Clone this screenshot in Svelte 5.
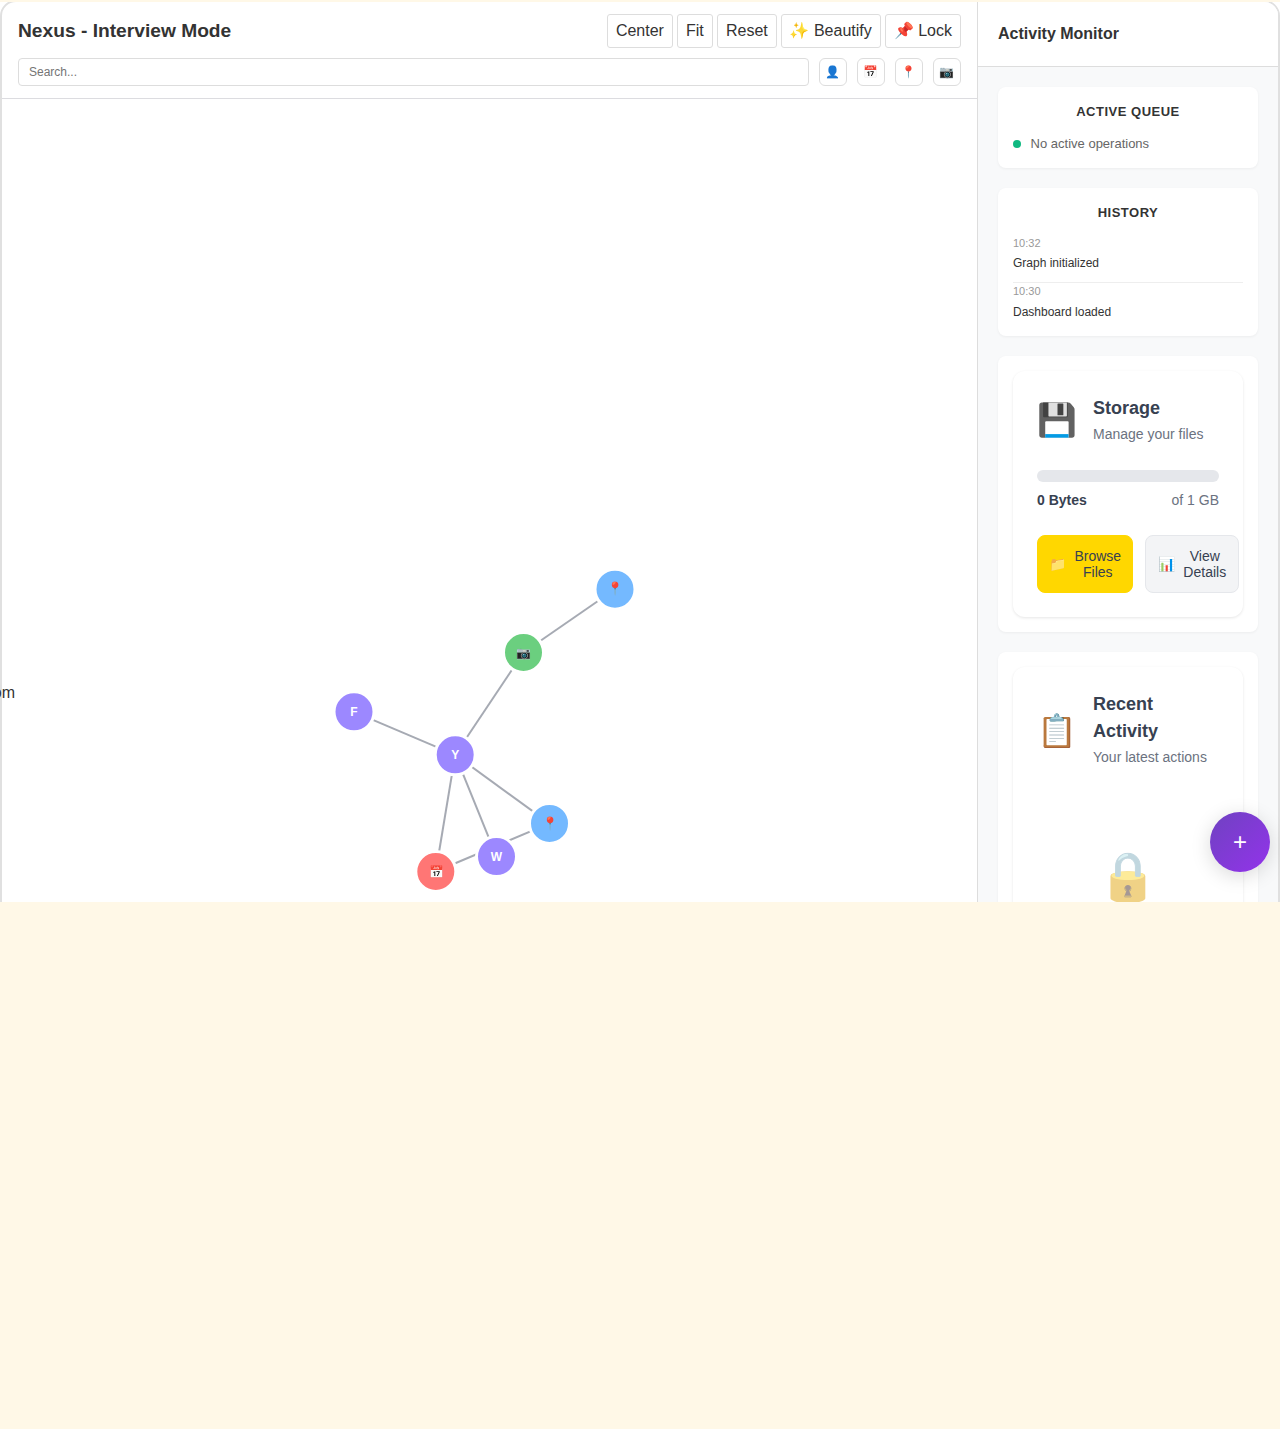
<script>
  const tools = ['Center', 'Fit', 'Reset', '✨ Beautify', '📌 Lock'];
  const filters = ['👤', '📅', '📍', '📷'];
  const nodes = [
    { x: 613, y: 587.2, fill: '#74b9ff', label: '📍' },
    { x: 521.5, y: 650.5, fill: '#6bcf7f', label: '📷' },
    { x: 352, y: 709.8, fill: '#9c88ff', label: 'F' },
    { x: 453.2, y: 752.8, fill: '#9c88ff', label: 'Y' },
    { x: 547.5, y: 821.4, fill: '#74b9ff', label: '📍' },
    { x: 494.5, y: 854.6, fill: '#9c88ff', label: 'W' },
    { x: 433.8, y: 869.5, fill: '#ff7675', label: '📅' }
  ];
  const edges = [[0, 1], [1, 3], [2, 3], [3, 6], [3, 5], [3, 4], [4, 6]];
  const history = [
    { time: '10:32', text: 'Graph initialized' },
    { time: '10:30', text: 'Dashboard loaded' }
  ];
</script>

<div class="viewport">
  <div class="frame">
    <main class="graph">
      <header>
        <div class="row">
          <h1>Nexus - Interview Mode</h1>
          <div class="tools">
            {#each tools as t}<button>{t}</button>{/each}
          </div>
        </div>
        <div class="row filters">
          <input placeholder="Search..." />
          {#each filters as f}<button class="filter">{f}</button>{/each}
        </div>
      </header>
      <svg class="canvas" viewBox="0 97 975 803" width="975" height="803">
        {#each edges as [a, b]}
          <line x1={nodes[a].x} y1={nodes[a].y} x2={nodes[b].x} y2={nodes[b].y} />
        {/each}
        {#each nodes as n}
          <circle cx={n.x} cy={n.y} r="20" fill={n.fill} />
          <text class:pin={n.label === '📍'} x={n.label.length > 1 ? n.x + 0.2 : n.x} y={n.y + 4.2}>{n.label}</text>
        {/each}
        <text class="loose" x="13" y="696">om</text>
      </svg>
    </main>
    <aside>
      <h2>Activity Monitor</h2>
      <div class="panels">
        <section>
          <h3>Active Queue</h3>
          <div class="status"><i></i>No active operations</div>
        </section>
        <section>
          <h3>History</h3>
          {#each history as h}
            <div class="entry"><time>{h.time}</time><p>{h.text}</p></div>
          {/each}
        </section>
        <section>
          <div class="card storage">
            <div class="head">
              <span class="icon">💾</span>
              <div><h4>Storage</h4><p>Manage your files</p></div>
            </div>
            <div class="meter"></div>
            <div class="usage"><b>0 Bytes</b><span>of 1 GB</span></div>
            <div class="actions">
              <button class="primary"><span>📁</span>Browse<br />Files</button>
              <button class="secondary"><span>📊</span>View<br />Details</button>
            </div>
          </div>
        </section>
        <section>
          <div class="card recent">
            <div class="head">
              <span class="icon">📋</span>
              <div><h4>Recent Activity</h4><p>Your latest actions</p></div>
            </div>
            <div class="lock">🔒</div>
          </div>
        </section>
      </div>
    </aside>
  </div>
  <button class="fab">+</button>
</div>

<style>
  :global(body) { margin: 0; background: #fff8e7; }
  * { box-sizing: border-box; }
  .viewport {
    position: relative;
    height: 902px;
    overflow: hidden;
    border-top: 2px solid #fff8e7;
    background: #fff;
    font-family: 'Liberation Sans', Arial, sans-serif;
    color: #333;
  }
  .frame {
    display: flex;
    height: 960px;
    margin-top: -2px;
    border: 2px solid #e0e0e0;
    border-radius: 16px;
    background: #fff;
  }
  h1, h2, h3, h4, p { margin: 0; }
  button { font-family: inherit; color: inherit; padding: 0; }
  .graph { width: 975px; flex: none; }
  header {
    height: 97px;
    padding: 12px 16px;
    border-bottom: 1px solid #dcdce0;
  }
  .row { display: flex; align-items: center; justify-content: space-between; height: 34px; }
  h1 { font-size: 19.2px; line-height: 32px; color: #333; }
  .tools { display: flex; gap: 4px; }
  .tools button {
    height: 34px;
    padding: 0 8px;
    border: 1px solid #ddd;
    border-radius: 3px;
    background: #fff;
    font-size: 16px;
    line-height: 18px;
  }
  .tools button:nth-child(3) { padding: 0 8.25px; }
  .tools button:nth-child(4) { padding: 0 8px 0 7.5px; }
  .filters { height: 28px; margin-top: 10px; gap: 10px; }
  input {
    flex: 1;
    height: 28px;
    padding: 0 10px;
    border: 1px solid #ddd;
    border-radius: 4px;
    font: 12px 'Liberation Sans', Arial, sans-serif;
  }
  .filter {
    width: 28px;
    height: 28px;
    padding-right: 0.4px;
    border: 1px solid #ddd;
    border-radius: 6px;
    background: #fff;
    font-size: 12px;
  }
  .canvas { display: block; overflow: visible; }
  line { stroke: #a6aab3; stroke-width: 2; }
  circle { stroke: #fff; stroke-width: 3; }
  text { font-size: 12px; font-weight: 700; fill: #fff; text-anchor: middle; }
  .pin { font-size: 13px; }
  .loose { font-size: 16px; font-weight: 400; fill: #333; text-anchor: end; }
  aside {
    flex: 1;
    min-width: 0;
    border-left: 1px solid #ddd;
    border-top-right-radius: 14px;
    background: #f8f9fa;
  }
  h2 {
    height: 65px;
    padding-left: 20px;
    border-bottom: 1px solid #ddd;
    border-top-right-radius: 14px;
    background: #fff;
    font-size: 16px;
    line-height: 64px;
    color: #333;
  }
  .panels { display: flex; flex-direction: column; gap: 20px; padding: 20px; }
  section {
    padding: 15px;
    border-radius: 8px;
    background: #fff;
    box-shadow: 0 1px 3px rgba(0, 0, 0, 0.05);
  }
  h3 {
    margin-bottom: 12px;
    font-size: 13px;
    line-height: 20px;
    letter-spacing: 0.5px;
    text-align: center;
    text-transform: uppercase;
    color: #333;
  }
  .status { display: flex; align-items: center; gap: 9.6px; height: 19px; font-size: 13px; color: #666; }
  .status i { width: 8px; height: 8px; border-radius: 50%; background: #10b981; }
  .entry { height: 48px; padding-top: 1px; border-bottom: 1px solid #eee; }
  .entry time { display: block; font-size: 11px; line-height: 15px; color: #999; }
  .entry p { margin-top: 2px; font-size: 12px; line-height: 20px; }
  .entry:last-child { height: 38px; border: 0; }
  .entry:last-child p { margin-top: 3px; }
  .card {
    height: 246px;
    padding: 24px;
    border-radius: 12px;
    background: #fff;
    box-shadow: 0 1px 3px rgba(0, 0, 0, 0.1);
  }
  .head { display: flex; align-items: center; gap: 16px; }
  .icon { width: 40px; font-size: 32px; line-height: 50px; text-align: center; }
  .storage .icon { padding-bottom: 1px; }
  .recent .icon { padding-top: 1px; }
  h4 { font-size: 18px; line-height: 27px; color: #374151; }
  .head p { font-size: 14px; line-height: 24px; color: #6b7280; }
  .meter { height: 12px; margin-top: 24px; border-radius: 6px; background: #e5e7eb; }
  .usage { display: flex; justify-content: space-between; margin-top: 8px; font-size: 14px; line-height: 20px; color: #6b7280; }
  .usage b { color: #374151; }
  .actions { display: flex; gap: 12px; margin-top: 25px; }
  .actions button {
    display: grid;
    grid-template-columns: auto auto;
    flex: none;
    column-gap: 8.5px;
    place-content: center;
    align-items: center;
    height: 58px;
    border-radius: 8px;
    font-size: 14px;
    line-height: 16px;
    color: #374151;
  }
  .primary { width: 96px; border: 1px solid #ffd700; background: #ffd700; }
  .secondary { width: 94px; border: 1px solid #e5e7eb; background: #f3f4f6; }
  .recent { height: 360px; }
  .lock { margin-top: 72px; font-size: 48px; line-height: 72px; text-align: center; opacity: 0.5; }
  .fab {
    position: absolute;
    top: 810px;
    right: 10px;
    width: 60px;
    height: 60px;
    border: 0;
    border-radius: 50%;
    background: linear-gradient(135deg, #6f42c1, #9333ea);
    box-shadow: 0 4px 20px rgba(0, 0, 0, 0.15);
    color: #fff;
    font-size: 24px;
  }
</style>
